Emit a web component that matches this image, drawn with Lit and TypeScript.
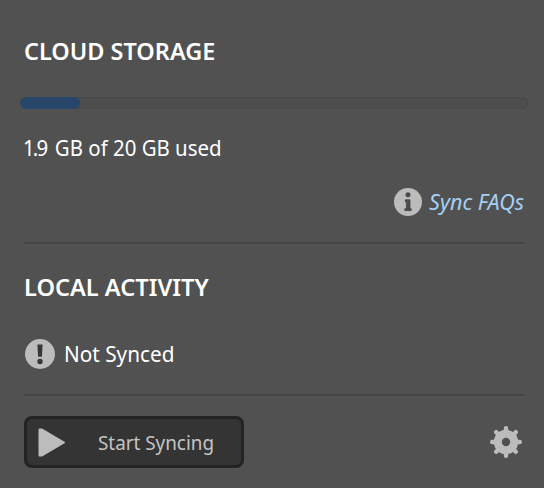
import { LitElement, html, css } from "lit";
import { customElement, property } from "lit/decorators.js";

@customElement("storage-meter")
class StorageMeter extends LitElement {
  @property({ type: Number }) used = 0;
  @property({ type: Number }) total = 1;

  static styles = css`
    :host { display: block; }
    .track {
      height: 12px;
      box-sizing: border-box;
      border-radius: 6px;
      background: #4d4d4d;
      box-shadow: inset 0 0 0 1px #484848;
      overflow: hidden;
    }
    .fill {
      height: 100%;
      min-width: 60px;
      border-radius: 6px;
      background: #274669;
    }
  `;

  render() {
    return html`<div class="track">
      <div class="fill" style="width:${(this.used / this.total) * 100}%"></div>
    </div>`;
  }
}

@customElement("app-root")
class AppRoot extends LitElement {
  static styles = css`
    :host {
      display: block;
      box-sizing: border-box;
      height: 488px;
      padding: 36px 20px 0 24px;
      background: #515151;
      color: #fff;
      font-family: "Noto Sans", "Open Sans", sans-serif;
      font-size: 21.5px;
      overflow: hidden;
    }
    h2 {
      margin: 0;
      height: 30px;
      line-height: 30px;
      font-size: 23px;
      font-weight: 600;
      white-space: nowrap;
    }
    .text {
      display: inline-block;
      line-height: 30px;
      white-space: nowrap;
      transform-origin: 0 50%;
    }
    .cloud { transform: scaleX(1.02); }
    .local { transform: scaleX(1.025); }
    .used { transform: scaleX(0.95); }
    .tight { letter-spacing: -2px; margin: 0 3.5px 0 -1px; }
    .status-text { transform: scaleX(0.965); }
    .faq-text {
      transform-origin: 100% 50%;
      font-style: italic;
      color: #a6d0f2;
    }
    .start-text { transform: scaleX(0.92); }
    storage-meter { margin: 31px -4px 24px; }
    .usage { height: 30px; line-height: 30px; }
    .faq {
      display: flex;
      justify-content: flex-end;
      align-items: center;
      height: 30px;
      margin-top: 24px;
    }
    .faq-link {
      display: flex;
      align-items: center;
      justify-content: space-between;
      width: 130px;
      height: 30px;
      text-decoration: none;
    }
    svg { display: block; flex: none; }
    .rule {
      height: 2px;
      background: #454545;
      border-bottom: 1px solid #565656;
    }
    .rule.first { margin: 25px 0 27px; }
    .rule.second { margin: 25px 0 19px; }
    .status {
      display: flex;
      align-items: center;
      gap: 9px;
      height: 30px;
      margin-top: 37px;
      padding-left: 1px;
    }
    .actions {
      display: flex;
      align-items: center;
      justify-content: space-between;
      height: 52px;
      padding-right: 2px;
    }
    button {
      display: flex;
      align-items: center;
      gap: 32px;
      width: 220px;
      height: 52px;
      box-sizing: border-box;
      margin: 0;
      padding: 0 0 0 11px;
      border: 3px solid #232323;
      border-radius: 8px;
      background: #343434;
      color: #c4c4c4;
      font-family: inherit;
      font-size: 20.5px;
      text-align: left;
    }
  `;

  render() {
    return html`
      <h2><span class="text cloud">CLOUD STORAGE</span></h2>
      <storage-meter .used=${1.9} .total=${20}></storage-meter>
      <div class="usage"><span class="text used"><span class="tight">1.9</span> GB of 20 GB used</span></div>
      <div class="faq">
        <a class="faq-link">
          <svg width="28" height="28" viewBox="0 0 28 28">
            <circle cx="14" cy="14" r="14" fill="#bcbcbc" />
            <circle cx="14" cy="6.8" r="2.5" fill="#4b4b4b" />
            <path d="M11.4 11.8h4.6v8.9h1.2v1.9h-6.4v-1.9h1.6v-6.9h-1.2z"
              fill="#4b4b4b" stroke="#4b4b4b" stroke-width=".9" stroke-linejoin="round" />
          </svg>
          <span class="text faq-text">Sync FAQs</span>
        </a>
      </div>
      <div class="rule first"></div>
      <h2><span class="text local">LOCAL ACTIVITY</span></h2>
      <div class="status">
        <svg width="30" height="30" viewBox="0 0 30 30">
          <circle cx="15" cy="15" r="15" fill="#bcbcbc" />
          <path d="M12.4 5.4h5.2l-.7 12.4h-3.8z" fill="#373737" />
          <circle cx="15" cy="22.5" r="2.7" fill="#373737" />
        </svg>
        <span class="text status-text">Not Synced</span>
      </div>
      <div class="rule second"></div>
      <div class="actions">
        <button type="button">
          <svg width="28" height="29" viewBox="0 0 28 29">
            <path d="M1.5 1.5h2.5L26 14.5 4 27.5H1.5z" fill="#bcbcbc"
              stroke="#bcbcbc" stroke-width="2" stroke-linejoin="round" />
          </svg>
          <span class="text start-text">Start Syncing</span>
        </button>
        <svg width="32" height="32" viewBox="-16 -16 32 32">
          <path d="M0-13.8V-10M0 13.8V10M-13.8 0H-10M13.8 0H10M-9.8-9.8l2 2M9.8-9.8l-2 2M-9.8 9.8l2-2M9.8 9.8l-2-2"
            fill="none" stroke="#bcbcbc" stroke-width="4.4" stroke-linecap="round" />
          <circle r="8.2" fill="none" stroke="#bcbcbc" stroke-width="8" />
        </svg>
      </div>
    `;
  }
}
